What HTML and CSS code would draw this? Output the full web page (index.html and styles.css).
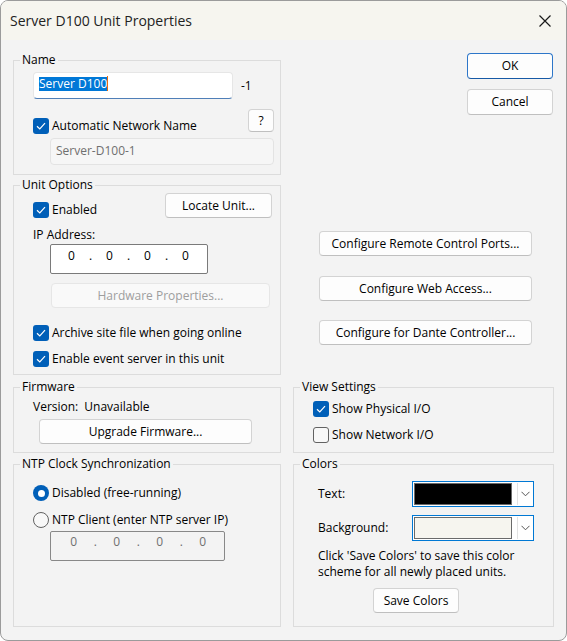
FILE: index.html
```html
<!DOCTYPE html>
<html>
<head>
<meta charset="utf-8">
<title>Server D100 Unit Properties</title>
<link rel="stylesheet" href="styles.css">
</head>
<body>
<div class="window">
  <div class="titlebar">
    <span class="title">Server D100 Unit Properties</span>
    <svg class="close" width="14" height="14" viewBox="0 0 14 14"><path d="M1.5 1.5L12.5 12.5M12.5 1.5L1.5 12.5" stroke="#1a1a1a" stroke-width="1.2" fill="none"/></svg>
  </div>
  <div class="content">
    <div class="col-left">
      <div class="group g-name">
        <div class="legend">Name</div>
        <div class="name-row">
          <div class="textbox"><span class="sel">Server D100</span><span class="caret"></span></div>
          <span class="suffix">-1</span>
        </div>
        <div class="auto-row">
          <label class="check auto-check"><span class="cb on"><svg width="16" height="16" viewBox="0 0 16 16"><path d="M4 8.3L6.8 11L12 5.2" stroke="#fff" stroke-width="1.2" fill="none"/></svg></span>Automatic Network Name</label>
          <button class="btn qbtn">?</button>
        </div>
        <div class="netname">Server-D100-1</div>
      </div>
      <div class="group g-unit">
        <div class="legend">Unit Options</div>
        <div class="enabled-row">
          <label class="check"><span class="cb on"><svg width="16" height="16" viewBox="0 0 16 16"><path d="M4 8.3L6.8 11L12 5.2" stroke="#fff" stroke-width="1.2" fill="none"/></svg></span>Enabled</label>
          <button class="btn locate">Locate Unit...</button>
        </div>
        <div class="ip-label">IP Address:</div>
        <div class="ip"><span>0</span><span>.</span><span>0</span><span>.</span><span>0</span><span>.</span><span>0</span></div>
        <button class="btn disabled hw">Hardware Properties...</button>
        <label class="check archive"><span class="cb on"><svg width="16" height="16" viewBox="0 0 16 16"><path d="M4 8.3L6.8 11L12 5.2" stroke="#fff" stroke-width="1.2" fill="none"/></svg></span>Archive site file when going online</label>
        <label class="check event"><span class="cb on"><svg width="16" height="16" viewBox="0 0 16 16"><path d="M4 8.3L6.8 11L12 5.2" stroke="#fff" stroke-width="1.2" fill="none"/></svg></span>Enable event server in this unit</label>
      </div>
    </div>
    <div class="col-right">
      <button class="btn default okbtn">OK</button>
      <button class="btn cancelbtn">Cancel</button>
      <button class="btn cfg cfg1">Configure Remote Control Ports...</button>
      <button class="btn cfg cfg2">Configure Web Access...</button>
      <button class="btn cfg cfg3">Configure for Dante Controller...</button>
    </div>
    <div class="group g-firm">
      <div class="legend">Firmware</div>
      <div class="version"><span>Version:</span><span class="unavail">Unavailable</span></div>
      <button class="btn upgrade">Upgrade Firmware...</button>
    </div>
    <div class="group g-view">
      <div class="legend">View Settings</div>
      <label class="check phys"><span class="cb on"><svg width="16" height="16" viewBox="0 0 16 16"><path d="M4 8.3L6.8 11L12 5.2" stroke="#fff" stroke-width="1.2" fill="none"/></svg></span>Show Physical I/O</label>
      <label class="check netio"><span class="cb off"></span>Show Network I/O</label>
    </div>
    <div class="group g-ntp">
      <div class="legend">NTP Clock Synchronization</div>
      <label class="check radio1"><span class="rb on"><span class="dot"></span></span>Disabled (free-running)</label>
      <label class="check radio2"><span class="rb off"></span>NTP Client (enter NTP server IP)</label>
      <div class="ip ip-dis"><span>0</span><span>.</span><span>0</span><span>.</span><span>0</span><span>.</span><span>0</span></div>
    </div>
    <div class="group g-colors">
      <div class="legend">Colors</div>
      <div class="color-row first">
        <span class="clabel">Text:</span>
        <div class="combo"><span class="swatch black"></span><span class="drop"><svg width="9" height="6" viewBox="0 0 9 6"><path d="M0.5 0.8L4.5 4.8L8.5 0.8" stroke="#555" stroke-width="1" fill="none"/></svg></span></div>
      </div>
      <div class="color-row">
        <span class="clabel">Background:</span>
        <div class="combo"><span class="swatch cream"></span><span class="drop"><svg width="9" height="6" viewBox="0 0 9 6"><path d="M0.5 0.8L4.5 4.8L8.5 0.8" stroke="#555" stroke-width="1" fill="none"/></svg></span></div>
      </div>
      <p class="hint">Click 'Save Colors' to save this color<br>scheme for all newly placed units.</p>
      <button class="btn savebtn">Save Colors</button>
    </div>
  </div>
</div>
</body>
</html>
```

FILE: styles.css
```css
* { box-sizing: border-box; }
html, body { margin: 0; padding: 0; background: #ffffff; }
body {
  font-family: "Open Sans", "Noto Sans", sans-serif;
  font-size: 12px;
  line-height: 16px;
  color: #000;
}
.window {
  width: 567px;
  height: 641px;
  border: 1px solid #9b9b9b;
  border-radius: 8px;
  overflow: hidden;
  background: #f3f3f3;
  display: flex;
  flex-direction: column;
}
.titlebar {
  height: 39px;
  flex: none;
  background: #f6f5ef;
  display: flex;
  align-items: center;
  justify-content: space-between;
  padding: 0 14px 0 9px;
}
.title { font-size: 14px; line-height: 20px; color: #222; }
.close { display: block; }

.content {
  display: grid;
  grid-template-columns: 268px 261px;
  column-gap: 12px;
  padding: 13px 0 0 12px;
  align-items: start;
}

.group {
  border: 1px solid #dcdcdc;
  padding-left: 19px;
}
.legend {
  margin: -9px 0 0 -13px;
  padding: 0 2px;
  background: #f3f3f3;
  width: max-content;
  line-height: 16px;
}

/* buttons */
.btn {
  display: flex;
  align-items: center;
  justify-content: center;
  padding: 0;
  font: inherit;
  color: #000;
  background: #fdfdfd;
  border: 1px solid #d3d3d3;
  border-bottom-color: #bfbfbf;
  border-radius: 4px;
}
.btn.default { border-color: #2d76c9; border-bottom-color: #1659a6; }
.btn.disabled { color: #9e9e9e; background: #f9f9f9; border-color: #e6e6e6; }

/* checkboxes / radios */
.check { display: flex; align-items: center; gap: 3px; }
.cb {
  width: 16px; height: 16px; flex: none;
  border-radius: 3px;
  display: flex; align-items: center; justify-content: center;
}
.cb.on { background: #005fb8; }
.cb.off { background: #f8f8f8; border: 1px solid #626262; }
.cb svg { display: block; }
.rb {
  width: 16px; height: 16px; flex: none;
  border-radius: 50%;
  display: flex; align-items: center; justify-content: center;
}
.rb.on { background: #005fb8; }
.rb.on .dot { width: 7px; height: 7px; border-radius: 50%; background: #fff; }
.rb.off { background: #f8f8f8; border: 1px solid #626262; }

/* left column */
.col-left { display: flex; flex-direction: column; padding-top: 7px; }
.g-name { height: 115px; }
.name-row { display: flex; align-items: center; margin-top: 4px; }
.textbox {
  width: 200px; height: 27px;
  background: #fff;
  border: 1px solid #e6e6e6;
  border-bottom: 1px solid #4f7fb8;
  border-radius: 4px;
  padding: 3px 0 0 5px;
  display: flex;
  align-items: flex-start;
}
.sel { background: #0078d7; color: #fff; line-height: 14px; height: 14px; margin-top: 1px; }
.caret { width: 1px; height: 15px; background: #e86a10; }
.suffix { margin-left: 8px; }
.auto-row { display: flex; justify-content: space-between; align-items: flex-start; margin: 10px 6px 0 0; }
.auto-check { margin-top: 9px; }
.qbtn { width: 26px; height: 23px; }
.netname {
  margin: 4px 6px 0 17px;
  height: 27px;
  background: #f6f6f6;
  border: 1px solid #e3e3e3;
  border-radius: 4px;
  padding: 4px 0 0 5px;
  color: #6f6f6f;
}

.g-unit { height: 190px; margin-top: 10px; }
.enabled-row { display: flex; justify-content: space-between; align-items: flex-end; margin-right: 8px; }
.locate { width: 107px; height: 25px; }
.ip-label { margin-top: 9px; }
.ip {
  display: flex;
  width: 158px; height: 30px;
  margin: 1px 0 0 17px;
  background: #fff;
  border: 1px solid #7a7a7a;
  border-radius: 2px;
  padding: 3px 0 0 11px;
}
.ip span { width: 19px; text-align: center; }
.hw { width: 219px; height: 25px; margin: 9px 0 0 18px; }
.archive { margin-top: 17px; }
.event { margin-top: 10px; }

.g-firm { height: 66px; margin-top: 12px; }
.version { margin-top: 4px; }
.unavail { margin-left: 6px; }
.upgrade { width: 213px; height: 25px; margin: 4px 0 0 6px; }

.g-ntp { height: 163px; margin-top: 11px; }
.radio1 { margin-top: 13px; }
.radio2 { margin-top: 11px; }
.ip.ip-dis {
  width: 175px;
  margin: 3px 0 0 17px;
  background: transparent;
  border-color: #888888;
  color: #707070;
  padding: 2px 0 0 12px;
}
.ip.ip-dis span { width: 21.5px; }

/* right column */
.col-right { display: flex; flex-direction: column; align-items: flex-start; }
.okbtn { width: 86px; height: 26px; align-self: flex-end; margin-right: 1px; }
.cancelbtn { width: 86px; height: 26px; align-self: flex-end; margin: 10px 1px 0 0; }
.cfg { width: 213px; height: 25px; margin-left: 26px; }
.cfg1 { margin-top: 116px; }
.cfg2 { margin-top: 20px; }
.cfg3 { margin-top: 19px; }

.g-view { height: 66px; margin-top: 12px; }
.phys { margin-top: 6px; }
.netio { margin-top: 10px; }

.g-colors { height: 163px; margin-top: 11px; padding-left: 24px; }
.g-colors .legend { margin-left: -18px; }
.color-row { display: flex; align-items: center; margin-top: 8px; }
.color-row.first { margin-top: 9px; }
.clabel { width: 94px; }
.combo {
  display: flex;
  width: 122px; height: 26px;
  border: 1px solid #0078d4;
  background: #fff;
  padding: 1px 0 1px 1px;
}
.swatch { width: 98px; border: 1px solid #6a6a6a; }
.swatch.black { background: #000; }
.swatch.cream { background: #f6f5ef; }
.drop {
  width: 16px;
  margin-left: 5px;
  border-left: 1px solid #e2e2e2;
  display: flex; align-items: center; justify-content: center;
}
.drop svg { display: block; }
.hint { margin: 7px 0 0 0; }
.savebtn { width: 86px; height: 25px; margin: 8px 0 0 55px; }
```
